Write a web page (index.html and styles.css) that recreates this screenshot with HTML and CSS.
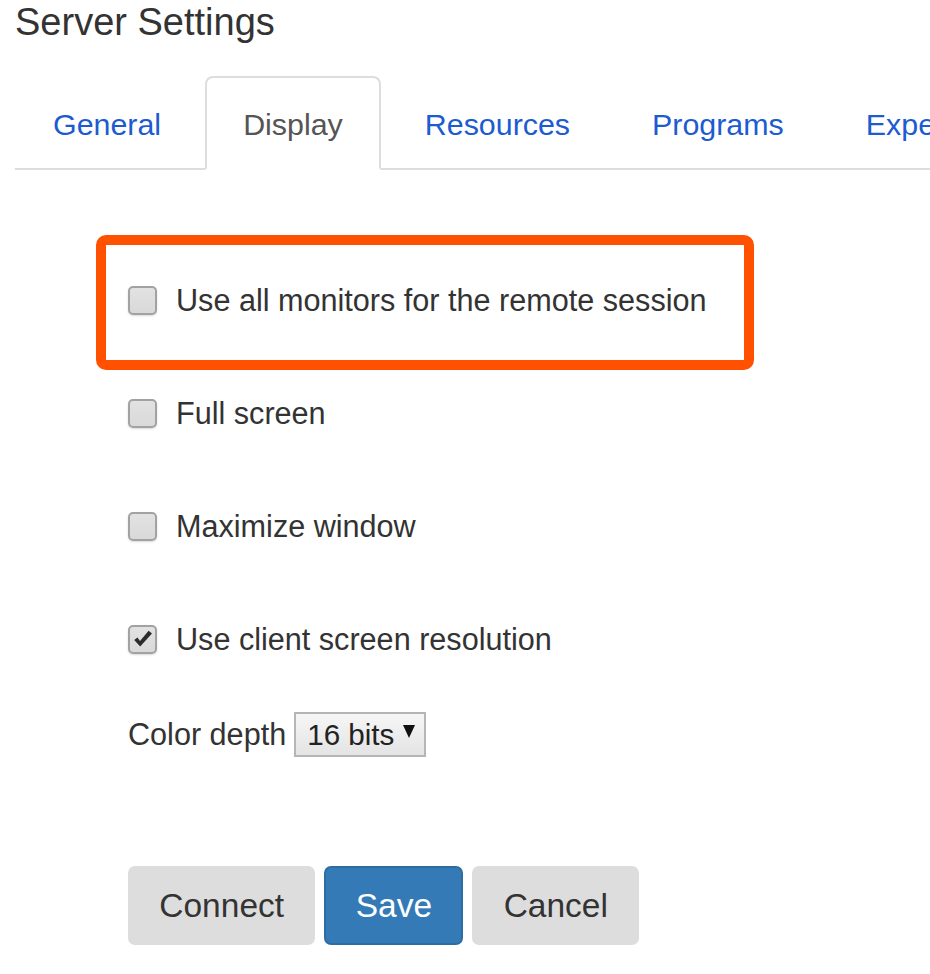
FILE: index.html
```html
<!DOCTYPE html>
<html lang="en">
<head>
<meta charset="utf-8">
<title>Server Settings</title>
<link rel="stylesheet" href="styles.css">
</head>
<body>
<div class="page">
  <h1 class="title">Server Settings</h1>
  <ul class="tabs">
    <li class="tab"><a href="#">General</a></li>
    <li class="tab active"><a href="#">Display</a></li>
    <li class="tab"><a href="#">Resources</a></li>
    <li class="tab"><a href="#">Programs</a></li>
    <li class="tab"><a href="#">Experience</a></li>
  </ul>
  <div class="panel">
    <div class="highlight"></div>
    <label class="check-row"><span class="box"></span><span>Use all monitors for the remote session</span></label>
    <label class="check-row"><span class="box"></span><span>Full screen</span></label>
    <label class="check-row"><span class="box"></span><span>Maximize window</span></label>
    <label class="check-row"><span class="box checked"><svg viewBox="0 0 20 20" width="20" height="20"><path d="M1.2 11 L7.2 17.6 L19 4.6 L15.6 1.8 L7 12 L4.4 8.4 Z" fill="#2b2b2b"/></svg></span><span>Use client screen resolution</span></label>
    <div class="depth-row">
      <span>Color depth</span>
      <span class="select"><span>16 bits</span><svg class="caret" viewBox="0 0 12 13" width="12" height="13"><polygon points="0,0 12,0 6,13" fill="#111"/></svg></span>
    </div>
    <div class="actions">
      <button class="btn">Connect</button>
      <button class="btn primary">Save</button>
      <button class="btn">Cancel</button>
    </div>
  </div>
</div>
</body>
</html>
```
FILE: styles.css
```css
html, body {
  margin: 0;
  padding: 0;
  overflow: hidden;
  background: #fff;
}
body {
  font-family: "Liberation Sans", Arial, sans-serif;
  color: #333;
}
.page {
  padding-left: 15px;
}
.title {
  margin: 0;
  font-size: 38px;
  font-weight: normal;
  line-height: 44px;
  color: #333;
}
.tabs {
  list-style: none;
  margin: 32px 0 0 0;
  padding: 0;
  display: flex;
  flex-wrap: nowrap;
  white-space: nowrap;
  border-bottom: 2px solid #ddd;
}
.tab {
  margin-right: 6px;
  margin-bottom: -2px;
  flex: none;
}
.tab a {
  display: block;
  font-size: 30.4px;
  line-height: 44px;
  padding: 24px 36px 22px;
  border: 2px solid transparent;
  border-radius: 8px 8px 0 0;
  color: #1c5bd0;
  text-decoration: none;
}
.tab.active a {
  color: #555;
  background: #fff;
  border-color: #ddd #ddd transparent #ddd;
}
.panel {
  position: relative;
  padding: 108px 0 0 113px;
  font-size: 30.6px;
}
.highlight {
  position: absolute;
  left: 81px;
  top: 65px;
  width: 658px;
  height: 135px;
  box-sizing: border-box;
  border: 10px solid #ff5100;
  border-radius: 10px;
  pointer-events: none;
}
.check-row {
  display: flex;
  align-items: center;
  height: 44px;
  color: #333;
}
.check-row + .check-row {
  margin-top: 69px;
}
.box {
  width: 29px;
  height: 29px;
  box-sizing: border-box;
  border: 2px solid #a2a2a2;
  border-radius: 5px;
  background: linear-gradient(#e2e2e2, #d9d9d9);
  box-shadow: 0 1px 2px rgba(0,0,0,0.15);
  margin-right: 19px;
  display: flex;
  align-items: center;
  justify-content: center;
  flex: none;
}
.depth-row {
  margin-top: 51px;
  display: flex;
  align-items: center;
  height: 45px;
}
.select {
  margin-left: 8px;
  height: 45px;
  box-sizing: border-box;
  border: 2px solid #b5b5b5;
  background: linear-gradient(#f6f6f6, #e4e4e4);
  padding: 0 9px 0 11px;
  display: flex;
  align-items: center;
  font-size: 29.6px;
  color: #222;
}
.caret {
  margin-left: 9px;
  margin-top: -6px;
}
.actions {
  margin-top: 109px;
  display: flex;
  gap: 9px;
}
.btn {
  font-family: "Liberation Sans", Arial, sans-serif;
  font-size: 33.5px;
  line-height: 48px;
  padding: 13.5px 29.3px;
  border: 2px solid #ddd;
  border-radius: 7px;
  background: #ddd;
  color: #333;
  cursor: pointer;
}
.btn.primary {
  background: #337ab7;
  border-color: #2e6da4;
  color: #fff;
}
```
